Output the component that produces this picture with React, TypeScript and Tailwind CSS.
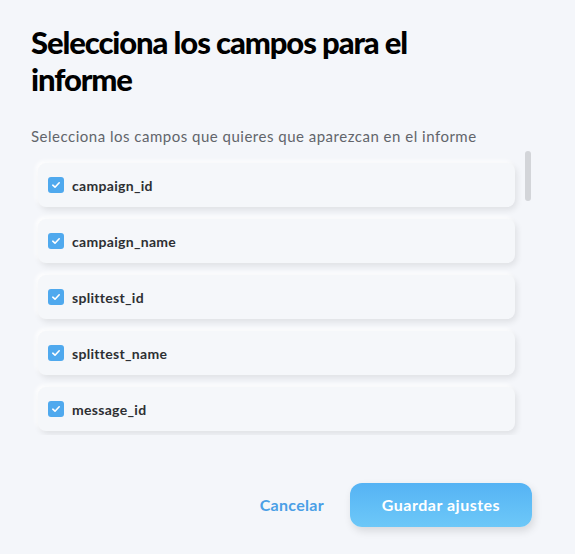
const fields = ["campaign_id", "campaign_name", "splittest_id", "splittest_name", "message_id"];

const CheckBox = () => (
  <span className="flex items-center justify-center w-4 h-4 rounded-[3px] bg-[#4fa9ee]">
    <svg width="10" height="10" viewBox="0 0 10 10" fill="none">
      <path d="M1.8 5.2 L4 7.2 L8.2 2.8" stroke="#ffffff" strokeWidth="1.6" strokeLinecap="round" strokeLinejoin="round" />
    </svg>
  </span>
);

const App = () => {
  return (
    <div className="w-[575px] h-[554px] bg-[#f4f6fa] font-['Lato','Liberation_Sans',sans-serif] pl-[31px] pt-[24px]">
      <h1 className="text-[31px] leading-[37px] font-black text-black w-[420px] tracking-[-1.1px]">
        Selecciona los campos para el informe
      </h1>
      <p className="mt-[29px] text-[15px] leading-[18px] tracking-[0.5px] text-[#62656b]">
        Selecciona los campos que quieres que aparezcan en el informe
      </p>
      <div className="relative mt-[6px] h-[284px] w-[500px] overflow-hidden">
        <div className="flex flex-col gap-3 pl-[7px] pt-[12px] w-[484px]">
          {fields.map((f) => (
            <div
              key={f}
              className="flex items-center gap-2 h-11 px-[10px] rounded-lg bg-[#f5f7fa] shadow-[2px_3px_6px_rgba(0,0,0,0.09),-2px_-2px_4px_#ffffff]"
            >
              <CheckBox />
              <span className="text-[14px] tracking-[0.3px] font-bold text-[#2d2f33]">{f}</span>
            </div>
          ))}
        </div>
        <div className="absolute right-0 top-0 w-[6px] h-[50px] rounded-full bg-[#d3d5d9]"></div>
      </div>
      <div className="flex items-center justify-end gap-[26px] mt-[48px] pr-[43px]">
        <button className="text-[16px] tracking-[0.3px] font-bold text-[#4a9fe6]">Cancelar</button>
        <button className="w-[182px] h-11 rounded-xl text-[16px] tracking-[0.5px] font-bold text-white bg-gradient-to-b from-[#55b3f4] to-[#6dc8f8] shadow-[2px_4px_8px_rgba(0,0,0,0.12)]">
          Guardar ajustes
        </button>
      </div>
    </div>
  );
};

export default App;
